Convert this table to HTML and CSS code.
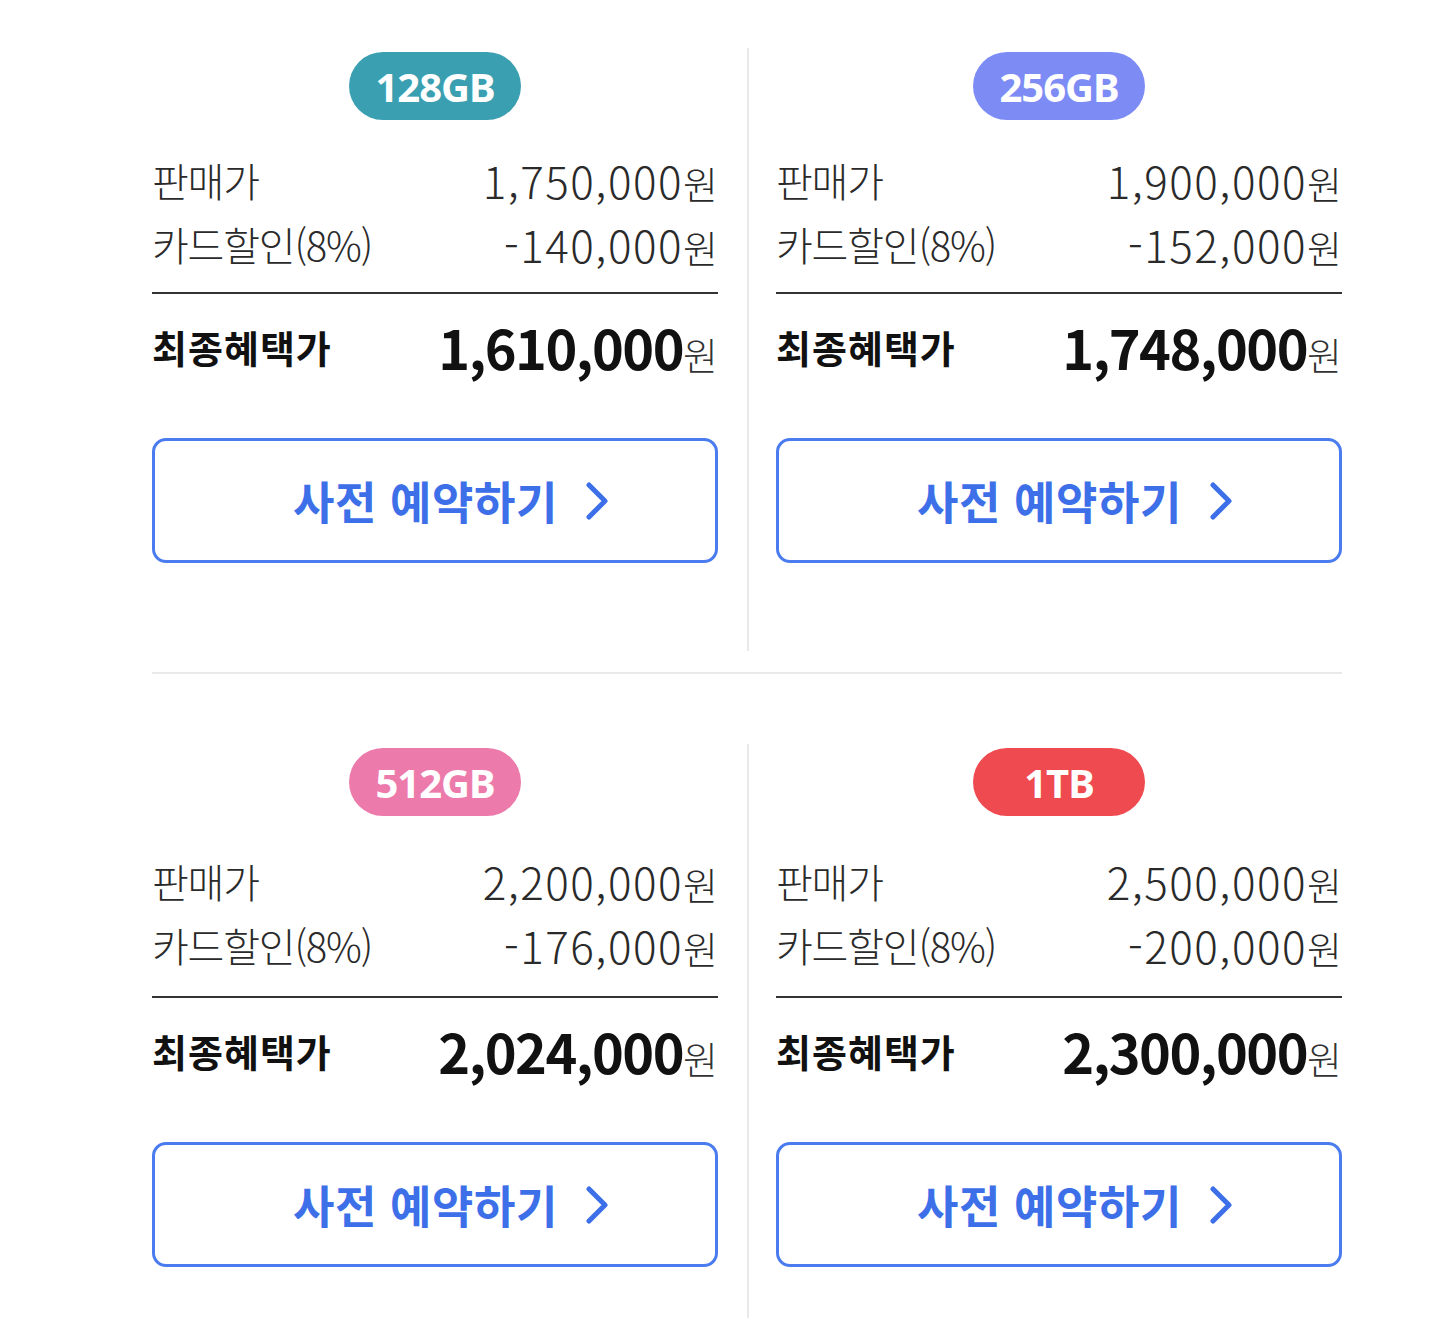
FILE: index.html
```html
<!DOCTYPE html>
<html lang="ko">
<head>
<meta charset="utf-8">
<title>사전 예약</title>
<link rel="stylesheet" href="styles.css">
</head>
<body>
<main class="page">
  <section class="grid">
    <div class="cell cell-left">
      <div class="badge-wrap"><span class="badge badge-teal">128GB</span></div>
      <div class="row"><span class="label">판매가</span><span class="value">1,750,000<span class="won">원</span></span></div>
      <div class="row"><span class="label">카드할인(8%)</span><span class="value">-140,000<span class="won">원</span></span></div>
      <div class="divider"></div>
      <div class="row total"><span class="label">최종혜택가</span><span class="value">1,610,000<span class="won">원</span></span></div>
      <a class="btn" href="#"><span class="btn-text">사전 예약하기</span><svg class="chev" viewBox="0 0 24 38" width="24" height="38"><polyline points="4,3 20,19 4,35" fill="none" stroke="#3d6fe9" stroke-width="5" stroke-linecap="round" stroke-linejoin="round"/></svg></a>
    </div>
    <div class="cell cell-right">
      <div class="badge-wrap"><span class="badge badge-purple">256GB</span></div>
      <div class="row"><span class="label">판매가</span><span class="value">1,900,000<span class="won">원</span></span></div>
      <div class="row"><span class="label">카드할인(8%)</span><span class="value">-152,000<span class="won">원</span></span></div>
      <div class="divider"></div>
      <div class="row total"><span class="label">최종혜택가</span><span class="value">1,748,000<span class="won">원</span></span></div>
      <a class="btn" href="#"><span class="btn-text">사전 예약하기</span><svg class="chev" viewBox="0 0 24 38" width="24" height="38"><polyline points="4,3 20,19 4,35" fill="none" stroke="#3d6fe9" stroke-width="5" stroke-linecap="round" stroke-linejoin="round"/></svg></a>
    </div>
  </section>
  <div class="hr"></div>
  <section class="grid grid-second">
    <div class="cell cell-left">
      <div class="badge-wrap"><span class="badge badge-pink">512GB</span></div>
      <div class="row"><span class="label">판매가</span><span class="value">2,200,000<span class="won">원</span></span></div>
      <div class="row"><span class="label">카드할인(8%)</span><span class="value">-176,000<span class="won">원</span></span></div>
      <div class="divider"></div>
      <div class="row total"><span class="label">최종혜택가</span><span class="value">2,024,000<span class="won">원</span></span></div>
      <a class="btn" href="#"><span class="btn-text">사전 예약하기</span><svg class="chev" viewBox="0 0 24 38" width="24" height="38"><polyline points="4,3 20,19 4,35" fill="none" stroke="#3d6fe9" stroke-width="5" stroke-linecap="round" stroke-linejoin="round"/></svg></a>
    </div>
    <div class="cell cell-right">
      <div class="badge-wrap"><span class="badge badge-red">1TB</span></div>
      <div class="row"><span class="label">판매가</span><span class="value">2,500,000<span class="won">원</span></span></div>
      <div class="row"><span class="label">카드할인(8%)</span><span class="value">-200,000<span class="won">원</span></span></div>
      <div class="divider"></div>
      <div class="row total"><span class="label">최종혜택가</span><span class="value">2,300,000<span class="won">원</span></span></div>
      <a class="btn" href="#"><span class="btn-text">사전 예약하기</span><svg class="chev" viewBox="0 0 24 38" width="24" height="38"><polyline points="4,3 20,19 4,35" fill="none" stroke="#3d6fe9" stroke-width="5" stroke-linecap="round" stroke-linejoin="round"/></svg></a>
    </div>
  </section>
</main>
</body>
</html>
```
FILE: styles.css
```css
* { box-sizing: border-box; }
html, body { margin: 0; padding: 0; background: #fff; }
body {
  font-family: "Noto Sans CJK KR", "Noto Sans", sans-serif;
  color: #222;
  overflow: hidden;
}
.page {
  width: 1190px;
  margin-left: 152px;
  padding-top: 48px;
}
.grid {
  display: grid;
  grid-template-columns: 595px 595px;
}
.grid-second { margin-top: 70px; }
.cell {
  display: flex;
  flex-direction: column;
  padding-top: 4px;
  padding-bottom: 88px;
}
.cell-left { padding-right: 29px; }
.cell-right { border-left: 2px solid #e9e9e9; padding-left: 27px; }
.badge-wrap {
  display: flex;
  justify-content: center;
  margin-bottom: 28px;
}
.grid-second .badge-wrap { margin-bottom: 33px; }
.badge {
  display: flex;
  align-items: center;
  justify-content: center;
  width: 172px;
  height: 68px;
  border-radius: 34px;
  color: #fff;
  font-family: "Noto Sans", "Noto Sans CJK KR", sans-serif;
  font-weight: 700;
  font-size: 40px;
  letter-spacing: -1px;
}
.badge-teal { background: #3a9fb1; }
.badge-purple { background: #7d8cf5; }
.badge-pink { background: #ec7aab; }
.badge-red { background: #ee4a50; }
.row {
  display: flex;
  justify-content: space-between;
  align-items: center;
  height: 64px;
  font-weight: 300;
  color: #2a2a2a;
}
.label {
  font-size: 40px;
  letter-spacing: -1.2px;
}
.value {
  font-size: 44px;
  letter-spacing: 1.5px;
}
.won {
  font-size: 38px;
  letter-spacing: 0;
  margin-left: 0;
}
.divider {
  height: 2px;
  background: #333;
  margin-top: 16px;
}
.grid-second .divider { margin-top: 19px; }
.row.total {
  margin-top: 20px;
  color: #111;
}
.total .label {
  font-weight: 700;
  font-size: 38px;
  letter-spacing: 1px;
}
.total .value {
  font-weight: 700;
  font-size: 54px;
  letter-spacing: -1.5px;
}
.total .won {
  font-weight: 300;
  font-size: 38px;
  color: #333;
}
.btn {
  margin-top: 60px;
  height: 125px;
  border: 3px solid #4a7bef;
  border-radius: 14px;
  padding-left: 32px;
  display: flex;
  align-items: center;
  justify-content: center;
  text-decoration: none;
  color: #3d6fe9;
}
.btn-text {
  font-size: 45px;
  font-weight: 700;
  letter-spacing: 0.6px;
}
.chev {
  margin-left: 27px;
  display: block;
}
.hr {
  height: 2px;
  background: #e9e9e9;
  margin-top: 21px;
}
```
